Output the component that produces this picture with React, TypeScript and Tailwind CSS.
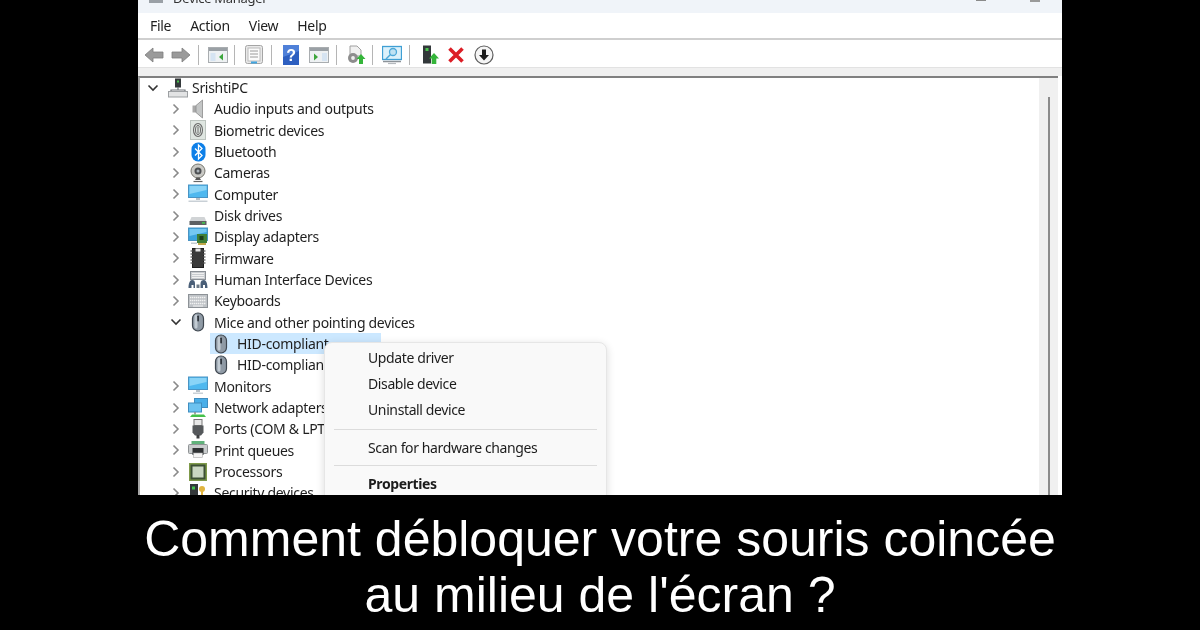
import type { ReactNode } from "react";

function Svg({ w = 20, h = 20, children }: { w?: number; h?: number; children: ReactNode }) {
  return (
    <svg width={w} height={h} viewBox={`0 0 ${w} ${h}`} className="shrink-0">
      {children}
    </svg>
  );
}

function ChevronRight() {
  return (
    <svg width="10" height="12" viewBox="0 0 10 12">
      <path d="M2.5 1.500 7 6l-4.500 4.500" fill="none" stroke="#8a8a8a" strokeWidth="1.600" />
    </svg>
  );
}

function ChevronDown() {
  return (
    <svg width="12" height="10" viewBox="0 0 12 10">
      <path d="M1.500 2.500 6 7l4.500-4.500" fill="none" stroke="#333" strokeWidth="1.600" />
    </svg>
  );
}

const MouseIcon = () => (
  <Svg w={14} h={20}>
    <rect x="1.500" y="1" width="11" height="18" rx="5.500" fill="#8f9aa5" stroke="#3f4750" strokeWidth="1.200" />
    <rect x="3.500" y="2.500" width="3" height="14" rx="1.500" fill="#c3ccd4" />
    <rect x="6.300" y="3.500" width="1.600" height="6" rx="0.800" fill="#262c33" />
  </Svg>
);

const icons: Record<string, ReactNode> = {
  audio: (
    <Svg w={14} h={20}>
      <path d="M1.500 6.500h3.500v7H1.500z" fill="#a9a9a9" />
      <path d="M5 6.500 11.500 1v18L5 13.500z" fill="#c4c6c6" stroke="#8c8c8c" strokeWidth="0.800" />
    </Svg>
  ),
  biometric: (
    <Svg w={16} h={20}>
      <rect x="0.500" y="0.500" width="15" height="19" fill="#dfe6e1" stroke="#bcc4bf" />
      <ellipse cx="8" cy="10" rx="4.500" ry="6.500" fill="none" stroke="#6b6b6b" strokeWidth="1.100" />
      <ellipse cx="8" cy="10" rx="2.500" ry="4.500" fill="none" stroke="#6b6b6b" strokeWidth="1" />
      <path d="M8 6.500v7" stroke="#6b6b6b" strokeWidth="1" />
    </Svg>
  ),
  bluetooth: (
    <Svg w={15} h={20}>
      <rect x="0.500" y="0.500" width="14" height="19" rx="6.500" fill="#0d7fe8" />
      <path d="m4 6.500 7 7-3.500 3.500v-14L11 6.500l-7 7" fill="none" stroke="#fff" strokeWidth="1.300" />
    </Svg>
  ),
  camera: (
    <Svg w={16} h={20}>
      <circle cx="8" cy="8" r="7" fill="#c9c9c5" stroke="#77776f" />
      <circle cx="8" cy="8" r="3.500" fill="#4c4f52" />
      <circle cx="8" cy="8" r="1.500" fill="#a8b0b6" />
      <path d="M5 17h6l-1.500-2.500h-3z" fill="#555" />
      <path d="M3.500 18.500h9" stroke="#666" strokeWidth="1.200" />
    </Svg>
  ),
  computer: (
    <Svg>
      <rect x="0.500" y="1" width="19" height="12.500" fill="#4fb8ef" stroke="#4a94c4" />
      <path d="M1.500 2h17v4L1.500 10z" fill="#8ad4f7" />
      <path d="M8 14h4v2H8z" fill="#b8c1c8" />
      <path d="M0.500 16.500h19v1.500H.5z" fill="#c9d0d6" />
    </Svg>
  ),
  disk: (
    <Svg>
      <path d="M3.500 11h13l2 4.500h-17z" fill="#d1d4d6" />
      <rect x="1.500" y="15" width="17" height="4" fill="#5d6062" />
      <rect x="14" y="16.200" width="3" height="1.400" fill="#3fd24b" />
    </Svg>
  ),
  display: (
    <Svg>
      <rect x="0.500" y="1" width="19" height="12.500" fill="#3ca4dc" stroke="#4a94c4" />
      <path d="M1.500 2h17v3L1.500 9z" fill="#75c8f2" />
      <rect x="9" y="7" width="10" height="9" fill="#3f7f37" />
      <rect x="11.500" y="9" width="4" height="4" fill="#1e3d1b" />
      <path d="M3 15.500h6v1.500H3z" fill="#c3cbd1" />
      <path d="M10 16h8v2h-8z" fill="#c2a94b" />
    </Svg>
  ),
  firmware: (
    <Svg w={16} h={20}>
      <rect x="2.500" y="0.500" width="11" height="19" fill="#3a3a3a" stroke="#1e1e1e" />
      <path d="M0.500 3h2M0.500 6h2M0.500 9h2M0.500 12h2M0.500 15h2M13.500 3h2M13.500 6h2M13.500 9h2M13.500 12h2M13.500 15h2" stroke="#777" strokeWidth="1.300" />
      <path d="M5.500 0.500h5v3h-5z" fill="#e5e5e5" />
    </Svg>
  ),
  hid: (
    <Svg>
      <rect x="2.500" y="1.500" width="15" height="8" fill="#c9ccd0" stroke="#8b9096" />
      <path d="M4 3.500h12M4 5.500h12M4 7.500h12" stroke="#f4f4f4" strokeWidth="0.900" />
      <path d="M0.500 18c0-5 1.500-8 3.500-8s3 1 3 3.500v4.500H5.500v-3h-2v3z" fill="#4a5f78" />
      <path d="M8.500 14.500h3V18h-3z" fill="#6d7a87" />
      <path d="M12.500 18v-4.500c0-2.500 1.500-3.500 3.500-3.500s3.500 3 3.500 8H17v-3h-2v3z" fill="#4a5f78" />
    </Svg>
  ),
  keyboard: (
    <Svg>
      <rect x="0.500" y="3.500" width="19" height="13" fill="#bfc3c7" stroke="#8d9297" />
      <path d="M2 6.500h16M2 9.500h16M2 12.500h16" stroke="#f2f2f2" strokeWidth="1.300" strokeDasharray="1.400 0.600" />
      <path d="M5 15h10" stroke="#f2f2f2" strokeWidth="1" />
    </Svg>
  ),
  mouse: <MouseIcon />,
  monitor: (
    <Svg>
      <rect x="0.500" y="1" width="19" height="12.500" fill="#4fb8ef" stroke="#4a94c4" />
      <path d="M1.500 2h17v4L1.500 10z" fill="#8ad4f7" />
      <path d="M8 14h4v2H8z" fill="#b8c1c8" />
      <path d="M5 16.500h10v1.500H5z" fill="#c9d0d6" />
    </Svg>
  ),
  network: (
    <Svg>
      <rect x="6.500" y="0.500" width="13" height="9" fill="#49aee8" stroke="#3f8dc0" />
      <rect x="0.500" y="5" width="13" height="9" fill="#6cc2f0" stroke="#3f8dc0" />
      <path d="M7 14v2.500" stroke="#8a8a8a" strokeWidth="1.500" />
      <path d="M2 19l2-2.500h12l2 2.500z" fill="#45c14a" />
    </Svg>
  ),
  ports: (
    <Svg w={14} h={20}>
      <rect x="3" y="0.500" width="8" height="6" fill="#e8e8e8" stroke="#777" />
      <path d="M1.500 6.500h11v7l-2.500 3H4l-2.500-3z" fill="#55585b" />
      <rect x="5.500" y="16" width="3" height="3.500" fill="#3c3e40" />
    </Svg>
  ),
  print: (
    <Svg>
      <rect x="3.500" y="1" width="13" height="4" fill="#60b27b" />
      <rect x="0.500" y="4.500" width="19" height="9" rx="1" fill="#c9cccd" stroke="#8f9395" />
      <rect x="4.500" y="8" width="11" height="7" fill="#2f3234" />
      <rect x="5.500" y="13" width="9" height="4.500" fill="#f5f5f5" stroke="#a8a8a8" strokeWidth="0.600" />
    </Svg>
  ),
  processor: (
    <Svg>
      <rect x="1" y="1" width="18" height="18" fill="#7f9a4a" />
      <rect x="2.500" y="2.500" width="15" height="15" fill="#3c5035" />
      <rect x="4.500" y="4.500" width="11" height="11" fill="#c9d6c2" />
    </Svg>
  ),
  security: (
    <Svg w={18} h={20}>
      <rect x="1" y="1" width="8" height="18" fill="#34383a" />
      <rect x="3" y="3.500" width="3" height="3" fill="#43c14a" />
      <circle cx="13" cy="6" r="3" fill="#e0b43f" />
      <path d="M13 8v9" stroke="#e0b43f" strokeWidth="2" />
    </Svg>
  ),
};

type Row = { label: string; icon: string; open?: boolean; child?: boolean; selected?: boolean };

const rows: Row[] = [
  { label: "Audio inputs and outputs", icon: "audio" },
  { label: "Biometric devices", icon: "biometric" },
  { label: "Bluetooth", icon: "bluetooth" },
  { label: "Cameras", icon: "camera" },
  { label: "Computer", icon: "computer" },
  { label: "Disk drives", icon: "disk" },
  { label: "Display adapters", icon: "display" },
  { label: "Firmware", icon: "firmware" },
  { label: "Human Interface Devices", icon: "hid" },
  { label: "Keyboards", icon: "keyboard" },
  { label: "Mice and other pointing devices", icon: "mouse", open: true },
  { label: "HID-compliant", icon: "mouse", child: true, selected: true },
  { label: "HID-compliant", icon: "mouse", child: true },
  { label: "Monitors", icon: "monitor" },
  { label: "Network adapters", icon: "network" },
  { label: "Ports (COM & LPT)", icon: "ports" },
  { label: "Print queues", icon: "print" },
  { label: "Processors", icon: "processor" },
  { label: "Security devices", icon: "security" },
];

function TreeRow({ row }: { row: Row }) {
  if (row.child) {
    return (
      <div className="h-[21.33px] flex items-center pl-[70px]">
        <div className={`flex items-center h-full w-[171px] pl-[4px] ${row.selected ? "bg-[#cce8ff]" : ""}`}>
          <span className="w-[14px] flex justify-center"><MouseIcon /></span>
          <span className="ml-[9px] whitespace-nowrap">{row.label}</span>
        </div>
      </div>
    );
  }
  return (
    <div className="h-[21.33px] flex items-center">
      <span className="w-[20px] ml-[26px] flex justify-center">
        {row.open ? <ChevronDown /> : <ChevronRight />}
      </span>
      <span className="w-[20px] ml-[2px] flex justify-center">{icons[row.icon]}</span>
      <span className="ml-[6px] whitespace-nowrap">{row.label}</span>
    </div>
  );
}

function Sep() {
  return <div className="w-px h-[20px] bg-[#b5b5b5] shrink-0" />;
}

function WindowIcon({ arrow }: { arrow: "left" | "right" }) {
  return (
    <Svg h={18}>
      <rect x="0.500" y="1.500" width="19" height="15" fill="#eef1f3" stroke="#a9adb0" />
      <rect x="1" y="2" width="18" height="3" fill="#9aa0a5" />
      {arrow === "left" ? (
        <>
          <rect x="2.500" y="7" width="5" height="8" fill="#d6e4f2" />
          <path d="M15 7.500v7l-4-3.500z" fill="#3da63d" />
        </>
      ) : (
        <>
          <rect x="13" y="7" width="5" height="8" fill="#d6e4f2" />
          <path d="M5 7.500v7l4-3.500z" fill="#3da63d" />
        </>
      )}
    </Svg>
  );
}

function Toolbar() {
  return (
    <div className="h-[27px] flex items-center pl-[6px] pt-[2px] bg-white">
      <Svg h={16}>
        <path d="M1 8 9 1v4h10v6H9v4z" fill="#9a9a9a" stroke="#7d7d7d" strokeWidth="0.800" />
      </Svg>
      <span className="ml-[7px]">
        <Svg h={16}>
          <path d="M19 8 11 1v4H1v6h10v4z" fill="#9a9a9a" stroke="#7d7d7d" strokeWidth="0.800" />
        </Svg>
      </span>
      <span className="ml-[7px]"><Sep /></span>
      <span className="ml-[9px]"><WindowIcon arrow="left" /></span>
      <span className="ml-[6px]"><Sep /></span>
      <span className="ml-[10px]">
        <Svg w={18} h={20}>
          <rect x="0.500" y="0.500" width="17" height="18" rx="2" fill="#e9e9e9" stroke="#a5a5a5" />
          <rect x="3" y="3" width="12" height="13" fill="#fbfbfb" stroke="#bcbcbc" />
          <path d="M5 6h8M5 9h8M5 12h8" stroke="#9a9a9a" strokeWidth="1" />
          <path d="M6 17.500h6" stroke="#41a5e0" strokeWidth="2" />
        </Svg>
      </span>
      <span className="ml-[8px]"><Sep /></span>
      <span className="ml-[11px]">
        <Svg w={16} h={20}>
          <rect width="16" height="20" fill="#2d5fc0" />
          <path d="M0 0h16v6L0 12z" fill="#4f80d8" />
          <text x="8" y="16" textAnchor="middle" fontSize="16" fontFamily="Liberation Sans" fontWeight="700" fill="#fff">?</text>
        </Svg>
      </span>
      <span className="ml-[10px]"><WindowIcon arrow="right" /></span>
      <span className="ml-[7px]"><Sep /></span>
      <span className="ml-[9px]">
        <Svg>
          <path d="M4 1h7l4 4v6H4z" fill="#f1f1f1" stroke="#a0a0a0" />
          <circle cx="7" cy="13" r="5" fill="#8d8d8d" />
          <circle cx="7" cy="13" r="1.900" fill="#eee" />
          <path d="M15 9l4.500 5H17v5h-4v-5h-2.500z" fill="#35b53a" />
        </Svg>
      </span>
      <span className="ml-[6px]"><Sep /></span>
      <span className="ml-[9px]">
        <Svg>
          <rect x="0.500" y="1.500" width="19" height="13" fill="#dcf1fb" stroke="#3f9fd4" strokeWidth="1.300" />
          <circle cx="11" cy="7" r="3.500" fill="#bfe2f3" stroke="#4da8d8" strokeWidth="1.300" />
          <path d="M8.500 9.500 4 14" stroke="#4da8d8" strokeWidth="1.500" />
          <path d="M1 16.500h18" stroke="#8c9399" strokeWidth="1.500" />
          <path d="M6 18.500h8" stroke="#b5babe" strokeWidth="1.200" />
        </Svg>
      </span>
      <span className="ml-[7px]"><Sep /></span>
      <span className="ml-[12px]">
        <Svg w={17} h={20}>
          <rect x="1" y="0.500" width="8" height="18" fill="#32383a" />
          <rect x="3.500" y="3" width="3" height="3" fill="#4ac24f" />
          <path d="M12 8l5 5.500h-2.700V19h-4.600v-5.500H7z" fill="#35b53a" />
        </Svg>
      </span>
      <span className="ml-[8px]">
        <Svg w={18} h={18}>
          <path d="M2.500 2.500l13 13M15.500 2.500l-13 13" stroke="#dc1e26" strokeWidth="3.600" />
        </Svg>
      </span>
      <span className="ml-[9px]">
        <Svg>
          <circle cx="10" cy="10" r="9" fill="#f5f5f5" stroke="#5e5e5e" strokeWidth="1.200" />
          <path d="M8 4.500h4V10h3l-5 5.500L5 10h3z" fill="#1c1c1c" />
        </Svg>
      </span>
    </div>
  );
}

function ContextMenu() {
  return (
    <div className="absolute left-[186px] top-[342px] w-[283px] h-[170px] rounded-lg bg-[#f9f9f9] border border-[#e6e6e6] shadow-[0_2px_8px_rgba(0,0,0,0.14)] text-[#1c1c1c] tracking-[-0.38px] pt-[1px]">
      <div className="h-[26px] flex items-center pl-[43px]">Update driver</div>
      <div className="h-[26px] flex items-center pl-[43px]">Disable device</div>
      <div className="h-[26px] flex items-center pl-[43px]">Uninstall device</div>
      <div className="h-px bg-[#dcdcdc] mx-[9px] mt-[7px]" />
      <div className="h-[35px] pb-[1px] flex items-center pl-[43px]">Scan for hardware changes</div>
      <div className="h-px bg-[#dcdcdc] mx-[9px]" />
      <div className="h-[34px] flex items-center pl-[43px] font-bold">Properties</div>
    </div>
  );
}

export default function App() {
  return (
    <div className="w-[1200px] h-[630px] bg-black flex flex-col overflow-hidden">
      <div className="relative mx-[138px] w-[924px] h-[495px] shrink-0 overflow-hidden bg-white text-[14px] text-[#1f1f1f] font-['Noto_Sans','Open_Sans',sans-serif] tracking-[-0.3px] blur-[0.35px]">
        <div className="h-[13px] bg-[#f0f4f9] flex items-start overflow-hidden">
          <div className="w-[14px] h-[3px] ml-[11px] bg-[#9aa0a6] shrink-0" />
          <span className="ml-[10px] text-[13px] leading-[13px] -translate-y-[8px] text-[#333] whitespace-nowrap">Device Manager</span>
          <div className="w-[10px] h-px ml-auto bg-[#8a8a8a] shrink-0" />
          <div className="w-[10px] h-[2px] ml-[44px] mr-[22px] bg-[#9a9a9a] shrink-0" />
        </div>
        <div className="h-[27px] flex items-center gap-[19px] pl-[12px] border-b-2 border-[#cfcfcf]">
          <span>File</span>
          <span>Action</span>
          <span>View</span>
          <span>Help</span>
        </div>
        <Toolbar />
        <div className="h-[9px] bg-[#f0f0f0] border-t border-[#e2e2e2]" />
        <div className="flex mr-[4px] h-[420px] border-l-2 border-t-2 border-l-[#a6a6a6] border-t-[#808080]">
          <div className="flex-1 min-w-0">
            <div className="h-[21.33px] flex items-center -mt-[1px]">
              <span className="w-[20px] ml-[3px] flex justify-center"><ChevronDown /></span>
              <span className="ml-[5px]">
                <Svg>
                  <rect x="7" y="0.500" width="6" height="9" fill="#34393b" />
                  <rect x="9" y="2.500" width="2" height="2" fill="#49c24f" />
                  <path d="M10 9v3M3 14v-2h14v2" fill="none" stroke="#70757a" strokeWidth="1.200" />
                  <rect x="0.500" y="13.500" width="19" height="5.500" fill="#e2e3e4" stroke="#9da0a3" />
                </Svg>
              </span>
              <span className="ml-[4px]">SrishtiPC</span>
            </div>
            {rows.map((row, i) => (
              <TreeRow key={i} row={row} />
            ))}
          </div>
          <div className="w-[19px] bg-[#f0f0f0] flex justify-center pt-[19px]">
            <div className="w-[2px] h-[400px] bg-[#8b8b8b]" />
          </div>
        </div>
        <ContextMenu />
      </div>
      <div className="flex-1 flex flex-col items-center justify-center pt-[8px] text-white text-[50px] leading-[56px] text-center font-['Liberation_Sans',Arial,sans-serif]">
        <div>Comment débloquer votre souris coincée</div>
        <div>au milieu de l'écran ?</div>
      </div>
    </div>
  );
}
